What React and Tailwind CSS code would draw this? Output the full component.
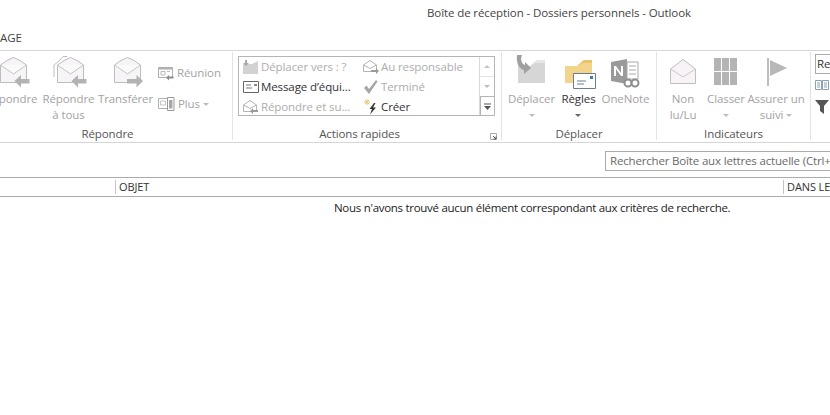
import React from 'react';

const Envelope = ({ arrow, all }) => (
    <svg width="36" height="34" viewBox="0 0 36 34" fill="none">
        {all && <path d="M3 22V10L8 6L12 1.5H16" stroke="#bdbdbd" fill="none" />}
        <path d="M6.5 27.5V10L13 5.5L19.5 2.5L26 5.5L32.5 10V27.5Z" fill="#f6f4f6" stroke="#bdbdbd" />
        <path d="M6.5 10L19.5 19L32.5 10" fill="#fbfafb" stroke="#c4c4c4" />
        {arrow === 'left' && <path d="M20.5 26L27 20V24H35.5V28.5H27V32.5Z" fill="#b3b3b3" />}
        {arrow === 'right' && <path d="M35 26L28.5 20V24H19V28.5H28.5V32.5Z" fill="#b3b3b3" />}
    </svg>
);

const SmallEnvelope = ({ dir }) => (
    <svg width="18" height="16" viewBox="0 0 18 16" fill="none">
        <path d="M1.5 12.5V6L8 1.5L14.5 6V12.5Z" fill="#fff" stroke="#b5b5b5" />
        <path d="M1.5 6L8 9.5L14.5 6" stroke="#b5b5b5" />
        {dir === 'left'
            ? <path d="M8 12L11 9V11H16V13H11V15Z" fill="#9b9b9b" />
            : <path d="M17 12L14 9V11H9V13H14V15Z" fill="#9b9b9b" />}
    </svg>
);

const Caret = ({ dark }) => (
    <svg width="6" height="3" viewBox="0 0 6 3" className="inline-block">
        <path d="M0 0H6L3 3Z" fill={dark ? '#666' : '#bdbdbd'} />
    </svg>
);

const BigButton = ({ icon, width, children, dark }) => (
    <div className={`flex flex-col items-center ${width}`}>
        <div className="h-[39px] flex items-start justify-center pt-[3px]">{icon}</div>
        <div className={`text-center leading-[16px] whitespace-nowrap ${dark ? 'text-[#333]' : 'text-[#a3a3a3]'}`}>{children}</div>
    </div>
);

const Group = ({ width, label, children, launcher }) => (
    <div className={`relative flex flex-col h-[88px] mt-px shrink-0 border-r border-[#e3e3e3] ${width}`}>
        <div className="flex">{children}</div>
        <div className={`mt-auto h-[12px] leading-[12px] text-center text-[#555] ${launcher ? 'pr-[15px]' : ''}`}>{label}</div>
        {launcher && (
            <svg width="7" height="7" viewBox="0 0 7 7" className="absolute right-[4px] bottom-[0px]">
                <path d="M0.5 0.5H6.5V6.5H0.5Z" fill="none" stroke="#aaa" />
                <path d="M3 3L6 6M6 3.5V6H3.5" stroke="#555" fill="none" />
            </svg>
        )}
    </div>
);

const QuickStep = ({ icon, dark, children }) => (
    <div className="flex items-center h-[20px]">
        <span className="w-[19px] flex justify-center shrink-0">{icon}</span>
        <span className={`ml-px whitespace-nowrap ${dark ? 'text-[#333]' : 'text-[#adadad]'}`}>{children}</span>
    </div>
);

const Folder = ({ color, tab }) => (
    <svg width="36" height="32" viewBox="0 0 36 32">
        <path d="M4 11H16L23 5H31V28H4Z" fill={color} />
        <path d="M16 11L23 5H31V8H22Z" fill={tab} />
    </svg>
);

const App = () => {
    return (
        <div className="w-[830px] h-[415px] overflow-hidden bg-white text-[11.5px] font-['Open_Sans',sans-serif] tracking-[-0.1px]">
            <div className="h-[26px] pl-[427px] leading-[26px] text-[#444] whitespace-nowrap">Boîte de réception - Dossiers personnels - Outlook</div>
            <div className="h-[24px] leading-[24px] text-[#444]">AGE</div>

            <div className="h-[93px] flex border-y border-[#d6d6d6] overflow-hidden">
                <div className="flex shrink-0 -ml-[17px]">
                    <Group width="w-[250px]" label="Répondre">
                        <BigButton width="w-[57px]" icon={<Envelope arrow="left" />}>Répondre</BigButton>
                        <BigButton width="w-[57px]" icon={<Envelope arrow="left" all />}>Répondre<br />à tous</BigButton>
                        <BigButton width="w-[57px]" icon={<Envelope arrow="right" />}>Transférer</BigButton>
                        <div className="ml-[4px] pt-[11px] text-[#a3a3a3]">
                            <div className="flex items-center gap-[3px] h-[20px]">
                                <svg width="16" height="15" viewBox="0 0 16 15" fill="none">
                                    <path d="M0.5 1.5H14.5V11.5H0.5Z" stroke="#b0b0b0" />
                                    <path d="M0.5 1.5H14.5V3.5H0.5Z" fill="#b0b0b0" />
                                    <path d="M3 5.5H7V9H3ZM9 5.5H12" stroke="#bbb" />
                                    <path d="M8 11.5L11 9V10.5H15.5V12.5H11V14.5Z" fill="#8c8c8c" />
                                </svg>
                                <span>Réunion</span>
                            </div>
                            <div className="flex items-center gap-[3px] h-[20px] mt-[11px]">
                                <svg width="17" height="16" viewBox="0 0 17 16" fill="none">
                                    <path d="M0.5 2.5H9.5V12.5H0.5Z" stroke="#b0b0b0" />
                                    <path d="M2.5 5H7.5V9H2.5Z" stroke="#c4c4c4" />
                                    <path d="M9.5 1.5H16V14.5H9.5Z" fill="#fff" stroke="#9a9a9a" />
                                    <path d="M11 4H14.5V12.5H11Z" fill="#a8a8a8" />
                                </svg>
                                <span>Plus</span>
                                <Caret />
                            </div>
                        </div>
                    </Group>
                    <Group width="w-[269px]" label="Actions rapides" launcher>
                        <div className="ml-[5px] mt-[4px] w-[257px] h-[60px] flex border border-[#b5b5b5]">
                            <div className="w-[240px] flex">
                                <div className="w-[121px] pl-[2px] overflow-hidden">
                                    <QuickStep icon={
                                        <svg width="16" height="15" viewBox="0 0 16 15"><path d="M0 4H9L15 1V14H0Z" fill="#d2d2d2" /><path d="M2 0V3H0L3 6L6 3H4V0Z" fill="#a8a8a8" /></svg>
                                    }>Déplacer vers : ?</QuickStep>
                                    <QuickStep dark icon={
                                        <svg width="16" height="12" viewBox="0 0 16 12" fill="none"><path d="M0.5 0.5H15.5V11.5H0.5Z" stroke="#666" /><path d="M3 4H8M3 7H9" stroke="#777" /><path d="M11 3H14V5H11Z" fill="#888" /></svg>
                                    }>Message d’équi...</QuickStep>
                                    <QuickStep icon={<SmallEnvelope dir="left" />}>Répondre et su...</QuickStep>
                                </div>
                                <div className="w-[119px] pl-px">
                                    <QuickStep icon={<SmallEnvelope dir="right" />}>Au responsable</QuickStep>
                                    <QuickStep icon={
                                        <svg width="15" height="14" viewBox="0 0 15 14"><path d="M1 8L3.5 5.5L6 9L13 0L14.5 1.5L6 14Z" fill="#a6a6a6" /></svg>
                                    }>Terminé</QuickStep>
                                    <QuickStep dark icon={
                                        <svg width="16" height="16" viewBox="0 0 16 16"><path d="M1 3H7M4 0V6M2 1L6 5M6 1L2 5" stroke="#e5c878" /><path d="M11 4L6.5 10H9L7 15.5L13 8.5H10L12.5 4Z" fill="#333" /></svg>
                                    }>Créer</QuickStep>
                                </div>
                            </div>
                            <div className="w-[15px] flex flex-col border-l border-[#d9d9d9]">
                                <div className="h-[20px] flex items-center justify-center border-b border-[#e3e3e3]">
                                    <svg width="6" height="3" viewBox="0 0 6 3"><path d="M0 3H6L3 0Z" fill="#c4c4c4" /></svg>
                                </div>
                                <div className="h-[19px] flex items-center justify-center">
                                    <Caret />
                                </div>
                                <div className="flex-1 flex items-center justify-center border border-[#b5b5b5] -mr-px -mb-px">
                                    <svg width="7" height="7" viewBox="0 0 7 7"><path d="M0 1H7" stroke="#555" /><path d="M0 3H7L3.5 7Z" fill="#555" /></svg>
                                </div>
                            </div>
                        </div>
                    </Group>
                    <Group width="w-[155px]" label="Déplacer">
                        <div className="flex pl-[6px]">
                            <BigButton width="w-[47px]" icon={
                                <div className="relative">
                                    <Folder color="#d6d6d6" tab="#e6e6e6" />
                                    <svg width="18" height="20" viewBox="0 0 18 20" className="absolute left-[1px] top-[0px]">
                                        <path d="M2 0H7C5 5 7 9 10 10V7L16 13L9 19V15C4 14 1 8 2 0Z" fill="#a0a0a0" />
                                    </svg>
                                </div>
                            }>Déplacer<br /><Caret /></BigButton>
                            <BigButton dark width="w-[47px]" icon={
                                <div className="relative">
                                    <Folder color="#f2d58b" tab="#e9c368" />
                                    <svg width="23" height="16" viewBox="0 0 23 16" className="absolute left-[12px] top-[18px]">
                                        <path d="M0.5 0.5H22.5V15.5H0.5Z" fill="#fff" stroke="#6c7f90" />
                                        <path d="M4 8H13M4 11H11" stroke="#6c7f90" />
                                        <path d="M17 3H20V6H17Z" fill="#3e7fb0" />
                                    </svg>
                                </div>
                            }>Règles<br /><Caret dark /></BigButton>
                            <BigButton width="w-[47px]" icon={
                                <svg width="30" height="32" viewBox="0 0 30 32" className="mt-[3px]">
                                    <path d="M0 4L16 1V26L0 23Z" fill="#9a9a9a" />
                                    <path d="M16 4H27V21H16Z" fill="#fff" stroke="#a8a8a8" />
                                    <path d="M18 8H25M18 12H25M18 16H25" stroke="#a8a8a8" />
                                    <path d="M3 18V8H5L10 15V8H12V18H10L5 11V18Z" fill="#fff" />
                                    <circle cx="17" cy="25" r="3.5" fill="#fff" stroke="#8f8f8f" strokeWidth="2" />
                                    <circle cx="24" cy="25" r="3.5" fill="none" stroke="#8f8f8f" strokeWidth="2" />
                                </svg>
                            }>OneNote</BigButton>
                        </div>
                    </Group>
                    <Group width="w-[154px]" label="Indicateurs">
                        <div className="flex pl-[4px]">
                            <BigButton width="w-[44px]" icon={
                                <svg width="28" height="28" viewBox="0 0 28 28" fill="none" className="mt-[3px]">
                                    <path d="M1.5 25.5V11L14 1.5L26.5 11V25.5Z" fill="#f7f3f7" stroke="#c0c0c0" />
                                    <path d="M1.5 11L14 19L26.5 11" stroke="#c8c8c8" />
                                </svg>
                            }>Non<br />lu/Lu</BigButton>
                            <BigButton width="w-[42px]" icon={
                                <svg width="24" height="28" viewBox="0 0 24 28" className="mt-[3px]">
                                    <path d="M0 0H7V13H0ZM8 0H15V13H8ZM16 0H23V13H16ZM0 14H7V27H0ZM8 14H15V27H8ZM16 14H23V27H16Z" fill="#b4b4b4" />
                                </svg>
                            }>Classer<br /><Caret /></BigButton>
                            <BigButton width="w-[58px]" icon={
                                <svg width="24" height="30" viewBox="0 0 24 30" className="mt-[3px]">
                                    <path d="M3 0H5V28H3Z" fill="#bdbdbd" />
                                    <path d="M6 2L23 10L6 18Z" fill="#b8b8b8" />
                                </svg>
                            }><span>Assurer un</span><br />suivi <Caret /></BigButton>
                        </div>
                    </Group>
                    <div className="pl-[4px] pt-[3px]">
                        <div className="w-[30px] h-[20px] pl-[1px] border border-[#ababab] leading-[18px] text-[#333]">Re</div>
                        <svg width="14" height="12" viewBox="0 0 14 12" className="mt-[5px]" fill="none">
                            <path d="M0.5 1.5H6.5V10.5H0.5ZM7.5 1.5H13.5V10.5H7.5ZM2 4H5M2 6H5M2 8H5M9 4H12M9 6H12M9 8H12" stroke="#8aa0b5" />
                        </svg>
                        <svg width="14" height="14" viewBox="0 0 14 14" className="mt-[9px]">
                            <path d="M0 0H14L9 6V14L5 11V6Z" fill="#555" />
                        </svg>
                    </div>
                </div>
            </div>

            <div className="h-[34px] pl-[605px] pt-[8px]">
                <div className="w-[240px] h-[20px] pl-[4px] border border-[#ababab] leading-[18px] text-[#6a6a6a] whitespace-nowrap tracking-[-0.17px]">Rechercher Boîte aux lettres actuelle (Ctrl+E)</div>
            </div>

            <div className="h-[20px] flex items-center border-y border-[#ababab] text-[11px] text-[#333]">
                <div className="w-[115px] shrink-0" />
                <div className="w-[668px] shrink-0 h-[14px] border-l border-[#c4c4c4] pl-[3px] leading-[14px]">OBJET</div>
                <div className="h-[14px] border-l border-[#c4c4c4] pl-[3px] leading-[14px] whitespace-nowrap">DANS LE</div>
            </div>

            <div className="pl-[334px] pt-[3px] leading-[16px] text-[#222] whitespace-nowrap tracking-[-0.29px]">Nous n'avons trouvé aucun élément correspondant aux critères de recherche.</div>
        </div>
    );
};

export default App;
